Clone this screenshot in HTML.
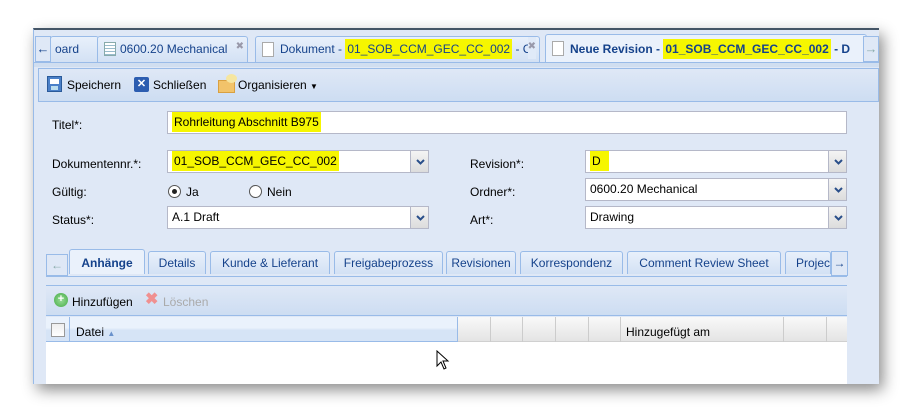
<!DOCTYPE html>
<html><head><meta charset="utf-8"><style>
*{box-sizing:border-box;margin:0;padding:0}
body{width:911px;height:416px;background:#fff;font-family:"Liberation Sans",Tahoma,sans-serif;font-size:12px;color:#000;position:relative;overflow:hidden}
.a{position:absolute}
.win{left:33px;top:28px;width:846px;height:356px;background:#dfe8f6;box-shadow:4px 6px 14px rgba(0,0,0,.45);border-left:1px solid #99bbe8;border-top:2px solid #456}
.hl{background:#f6f600;padding:3px 2px}
.tab{top:6px;height:26px;border:1px solid #99bbe8;border-bottom:none;border-radius:3px 3px 0 0;background:linear-gradient(#e8f0fb,#d3e1f4);color:#15428b;line-height:24px;padding-left:6px;white-space:nowrap;overflow:hidden;font-size:12px}
.fld{background:#fff;border:1px solid #b5b8c8;height:23px;line-height:21px;padding-left:4px;font-size:12px}
.trig{position:absolute;right:-1px;top:-1px;width:19px;height:23px;border:1px solid #b5b8c8;background:linear-gradient(#f4f4f4,#dcdcdc)}
.trig svg{position:absolute;left:5px;top:8px}
.lbl{font-size:12px}
.t2{top:0;height:23px;border:1px solid #99bbe8;border-bottom:none;border-radius:3px 3px 0 0;background:linear-gradient(#e8f0fb,#d3e1f4);color:#15428b;line-height:22px;text-align:center;font-size:12px;white-space:nowrap;overflow:hidden}
</style></head><body>
<div class="a win">
 <div class="a" style="left:0;top:0;width:845px;height:36px;background:#dfe8f6"></div>
 <div class="a" style="left:1px;top:6px;width:16px;height:26px;border:1px solid #99bbe8;background:#dfe8f6;color:#15428b;text-align:center;line-height:24px;font-size:13px;font-weight:bold">&#x2190;</div>
 <div class="a tab" style="left:16px;width:49px;padding-left:4px">oard</div>
 <div class="a tab" style="left:63px;width:151px;padding-left:22px">0600.20 Mechanical<span style="position:absolute;left:6px;top:5px;width:12px;height:14px;border:1px solid #8aa;background:repeating-linear-gradient(#fff 0 2px,#9bc 2px 3px)"></span><span style="position:absolute;right:3px;top:-2px;color:#99a;font-size:10px">&#x2716;</span></div>
 <div class="a tab" style="left:221px;width:285px;padding-left:24px">Dokument - <span class="hl">01_SOB_CCM_GEC_CC_002</span> - C<span style="position:absolute;left:6px;top:5px;width:12px;height:15px;border:1px solid #aaa;background:#fff"></span><span style="position:absolute;right:3px;top:-2px;color:#99a;font-size:10px;background:#e0eaf8">&#x2716;</span></div>
 <div class="a tab" style="left:511px;width:322px;padding-left:24px;background:#eaf1fb;font-weight:bold;height:28px;top:4px;line-height:28px">Neue Revision - <span class="hl">01_SOB_CCM_GEC_CC_002</span> - D<span style="position:absolute;left:6px;top:6px;width:12px;height:15px;border:1px solid #aaa;background:#fff"></span></div>
 <div class="a" style="left:829px;top:6px;width:16px;height:26px;border:1px solid #99bbe8;background:#dfe8f6;color:#8aa;text-align:center;line-height:24px;font-size:13px;font-weight:bold">&#x2192;</div>
 <div class="a" style="left:0;top:32px;width:845px;height:5px;background:#d0def0;border-top:1px solid #99bbe8"></div>
 <div class="a" style="left:4px;top:38px;width:841px;height:34px;border:1px solid #99bbe8;background:linear-gradient(#dfe8f6,#cdddf2)"></div>
 <div class="a" style="left:13px;top:46px;width:15px;height:16px;background:#4a80c8;border:1px solid #2a5a9a"><div style="margin:2px 2px 0;height:5px;background:#fff"></div><div style="margin:2px 3px 0;height:4px;background:#bde"></div></div>
 <div class="a lbl" style="left:33px;top:48px">Speichern</div>
 <div class="a" style="left:100px;top:47px;width:15px;height:15px;background:#2c5db0;border-radius:2px;color:#fff;font-size:11px;text-align:center;line-height:15px;font-weight:bold">&#x2715;</div>
 <div class="a lbl" style="left:119px;top:48px">Schließen</div>
 <div class="a" style="left:184px;top:50px;width:17px;height:13px;background:#f2c36a;border:1px solid #d9a040"></div>
 <div class="a" style="left:192px;top:44px;width:11px;height:9px;background:#f6e6a0;border-radius:50%"></div>
 <div class="a lbl" style="left:204px;top:48px">Organisieren <span style="font-size:8px">&#x25BC;</span></div>
 <div class="a lbl" style="left:18px;top:88px">Titel*:</div>
 <div class="a fld" style="left:133px;top:81px;width:680px"><span class="hl">Rohrleitung Abschnitt B975</span></div>
 <div class="a lbl" style="left:18px;top:127px">Dokumentennr.*:</div>
 <div class="a fld" style="left:133px;top:120px;width:262px"><span class="hl">01_SOB_CCM_GEC_CC_002</span><div class="trig"><svg width="9" height="6"><path d="M1 1L4.5 4.5L8 1" stroke="#2a4f8a" stroke-width="2" fill="none"/></svg></div></div>
 <div class="a lbl" style="left:18px;top:155px">Gültig:</div>
 <div class="a" style="left:134px;top:155px;width:13px;height:13px;border:1px solid #555;border-radius:50%;background:#fff"><div style="margin:3px;width:5px;height:5px;border-radius:50%;background:#222"></div></div>
 <div class="a lbl" style="left:152px;top:155px">Ja</div>
 <div class="a" style="left:215px;top:155px;width:13px;height:13px;border:1px solid #555;border-radius:50%;background:#fff"></div>
 <div class="a lbl" style="left:233px;top:155px">Nein</div>
 <div class="a lbl" style="left:18px;top:183px">Status*:</div>
 <div class="a fld" style="left:133px;top:176px;width:262px">A.1 Draft<div class="trig"><svg width="9" height="6"><path d="M1 1L4.5 4.5L8 1" stroke="#2a4f8a" stroke-width="2" fill="none"/></svg></div></div>
 <div class="a lbl" style="left:436px;top:127px">Revision*:</div>
 <div class="a fld" style="left:551px;top:120px;width:262px"><span class="hl" style="padding:3px 8px 3px 2px">D</span><div class="trig"><svg width="9" height="6"><path d="M1 1L4.5 4.5L8 1" stroke="#2a4f8a" stroke-width="2" fill="none"/></svg></div></div>
 <div class="a lbl" style="left:436px;top:155px">Ordner*:</div>
 <div class="a fld" style="left:551px;top:148px;width:262px">0600.20 Mechanical<div class="trig"><svg width="9" height="6"><path d="M1 1L4.5 4.5L8 1" stroke="#2a4f8a" stroke-width="2" fill="none"/></svg></div></div>
 <div class="a lbl" style="left:436px;top:183px">Art*:</div>
 <div class="a fld" style="left:551px;top:176px;width:262px">Drawing<div class="trig"><svg width="9" height="6"><path d="M1 1L4.5 4.5L8 1" stroke="#2a4f8a" stroke-width="2" fill="none"/></svg></div></div>
 <div class="a" style="left:12px;top:221px;width:801px;height:25px">
  <div class="a" style="left:0;top:3px;width:22px;height:22px;border:1px solid #99bbe8;background:#dfe8f6;color:#8aa;text-align:center;line-height:20px;font-weight:bold">&#x2190;</div>
  <div class="a t2" style="left:23px;width:76px;font-weight:bold;background:#eaf1fb;height:25px;top:-2px;line-height:26px">Anhänge</div>
  <div class="a t2" style="left:102px;width:58px">Details</div>
  <div class="a t2" style="left:164px;width:120px">Kunde &amp; Lieferant</div>
  <div class="a t2" style="left:288px;width:109px">Freigabeprozess</div>
  <div class="a t2" style="left:400px;width:70px">Revisionen</div>
  <div class="a t2" style="left:474px;width:103px">Korrespondenz</div>
  <div class="a t2" style="left:581px;width:154px">Comment Review Sheet</div>
  <div class="a t2" style="left:739px;width:46px;text-align:left;padding-left:10px">Projec</div>
  <div class="a" style="left:785px;top:0;width:17px;height:25px;border:1px solid #99bbe8;background:#dfe8f6;color:#15428b;text-align:center;line-height:23px;font-weight:bold">&#x2192;</div>
 </div>
 <div class="a" style="left:12px;top:246px;width:801px;height:10px;border-top:1px solid #99bbe8;border-bottom:1px solid #99bbe8;background:#dfe8f6"></div>
 <div class="a" style="left:12px;top:256px;width:801px;height:30px;background:linear-gradient(#dfe8f6,#cdddf2);border-bottom:1px solid #99bbe8"></div>
 <div class="a" style="left:20px;top:263px;width:14px;height:14px;border-radius:50%;background:radial-gradient(#9d9,#4a4);color:#fff;font-size:11px;font-weight:bold;text-align:center;line-height:13px">+</div>
 <div class="a lbl" style="left:38px;top:265px">Hinzufügen</div>
 <div class="a" style="left:111px;top:259px;color:#f09090;font-size:16px;font-weight:bold">&#x2716;</div>
 <div class="a lbl" style="left:129px;top:265px;color:#aaa">Löschen</div>
 <div class="a" style="left:12px;top:287px;width:801px;height:67px;background:#fff"></div>
 <div class="a" style="left:12px;top:287px;width:801px;height:25px;background:linear-gradient(#f9f9f9,#e4e4e4);border-bottom:1px solid #d0d0d0"></div>
 <div class="a" style="left:12px;top:287px;width:412px;height:25px;background:linear-gradient(#eaf2fc 45%,#d6e4f6 55%);border-bottom:1px solid #99bbe8;border-right:1px solid #99bbe8"></div>
 <div class="a" style="left:17px;top:293px;width:14px;height:14px;border:1px solid #999;background:linear-gradient(#eee,#fff)"></div>
 <div class="a" style="left:35px;top:287px;width:1px;height:25px;background:#99bbe8"></div>
 <div class="a lbl" style="left:42px;top:295px">Datei <span style="color:#6a92cc;font-size:8px">&#x25B2;</span></div>
 <div class="a" style="left:456px;top:287px;width:1px;height:25px;background:#ccc"></div>
 <div class="a" style="left:488px;top:287px;width:1px;height:25px;background:#ccc"></div>
 <div class="a" style="left:521px;top:287px;width:1px;height:25px;background:#ccc"></div>
 <div class="a" style="left:554px;top:287px;width:1px;height:25px;background:#ccc"></div>
 <div class="a" style="left:586px;top:287px;width:1px;height:25px;background:#ccc"></div>
 <div class="a lbl" style="left:592px;top:295px">Hinzugefügt am</div>
 <div class="a" style="left:749px;top:287px;width:1px;height:25px;background:#ccc"></div>
 <div class="a" style="left:792px;top:287px;width:1px;height:25px;background:#ccc"></div>
 <svg class="a" style="left:402px;top:320px" width="14" height="20"><path d="M1 1L1 16L5 12L8 19L10 18L7 11L12 11Z" fill="#fff" stroke="#000" stroke-width="1"/></svg>
</div>
</body></html>
